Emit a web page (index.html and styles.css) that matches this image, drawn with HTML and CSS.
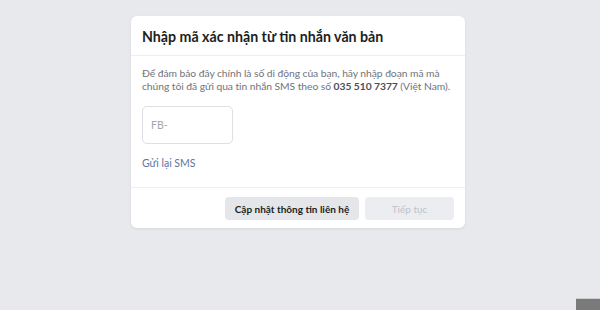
FILE: index.html
```html
<!DOCTYPE html>
<html>
<head>
<meta charset="utf-8">
<link rel="stylesheet" href="styles.css">
</head>
<body>

<div class="page">
  <div class="confirm-card">
    <div class="confirm-header">
      <h2 class="confirm-title">Nhập mã xác nhận từ tin nhắn văn bản</h2>
    </div>

    <div class="confirm-body">
      <p class="confirm-text">Để đảm bảo đây chính là số di động của bạn, hãy nhập đoạn mã mà<br>chúng tôi đã gửi qua tin nhắn SMS theo số <b>035 510 7377</b> (Việt Nam).</p>
      <input class="code-input" type="text" placeholder="FB-">
      <a class="resend-link" href="#">Gửi lại SMS</a>
    </div>

    <div class="confirm-footer">
      <button class="btn btn-secondary">Cập nhật thông tin liên hệ</button>
      <button class="btn btn-disabled" disabled>Tiếp tục</button>
    </div>
  </div>
</div>

<div class="corner-tab"></div>

</body>
</html>
```

FILE: styles.css
```css
html, body {
  margin: 0;
  padding: 0;
  height: 100%;
}

body {
  background-color: #e8e9ec;
  font-family: Lato, "Liberation Sans", Arial, sans-serif;
  color: #1c1e21;
  overflow: hidden;
}

.page {
  padding: 16px 4px 0 0;
}

.confirm-card {
  width: 334px;
  margin: 0 auto;
  background-color: #fff;
  border-radius: 6px;
  box-shadow: 0 1px 3px rgba(0, 0, 0, 0.08);
}

.confirm-header {
  padding: 0 11px;
  height: 39px;
  display: flex;
  align-items: center;
  border-bottom: 1px solid #eceef1;
}

.confirm-title {
  margin: 0;
  font-size: 14.2px;
  font-weight: 700;
  color: #1c1e21;
  padding-top: 2px;
}

.confirm-body {
  padding: 11px 6px 17px 11px;
  display: flex;
  flex-direction: column;
  align-items: flex-start;
  border-bottom: 1px solid #eceef1;
}

.confirm-text {
  margin: 0;
  font-size: 10.3px;
  letter-spacing: -0.05px;
  line-height: 13px;
  color: #6f747c;
  white-space: nowrap;
}

.confirm-text b {
  color: #4b4f56;
}

.code-input {
  margin-top: 13px;
  width: 91px;
  height: 38px;
  box-sizing: border-box;
  border: 1px solid #dddfe2;
  border-radius: 5px;
  padding: 0 8px;
  font-family: inherit;
  font-size: 10.5px;
  color: #1c1e21;
  outline: none;
}

.code-input::placeholder {
  color: #a4a8ae;
}

.resend-link {
  margin-top: 13px;
  font-size: 10.5px;
  line-height: 13px;
  color: #5b75a3;
  text-decoration: none;
}

.confirm-footer {
  display: flex;
  justify-content: flex-end;
  gap: 6px;
  padding: 9px 11px 8px;
}

.btn {
  height: 23px;
  border: none;
  border-radius: 4px;
  font-family: inherit;
  font-size: 10px;
  font-weight: 700;
  padding: 0 6px;
  white-space: nowrap;
}

.btn-secondary {
  background-color: #e4e6ea;
  color: #1c1e21;
  width: 134px;
}

.btn-disabled {
  background-color: #ebedf0;
  color: #bec3c9;
  font-weight: 400;
  width: 89px;
}

.corner-tab {
  position: fixed;
  right: 0;
  bottom: 0;
  width: 24px;
  height: 11px;
  background-color: #7a7a7a;
  border-top: 1px solid #cfcfcf;
}
```
